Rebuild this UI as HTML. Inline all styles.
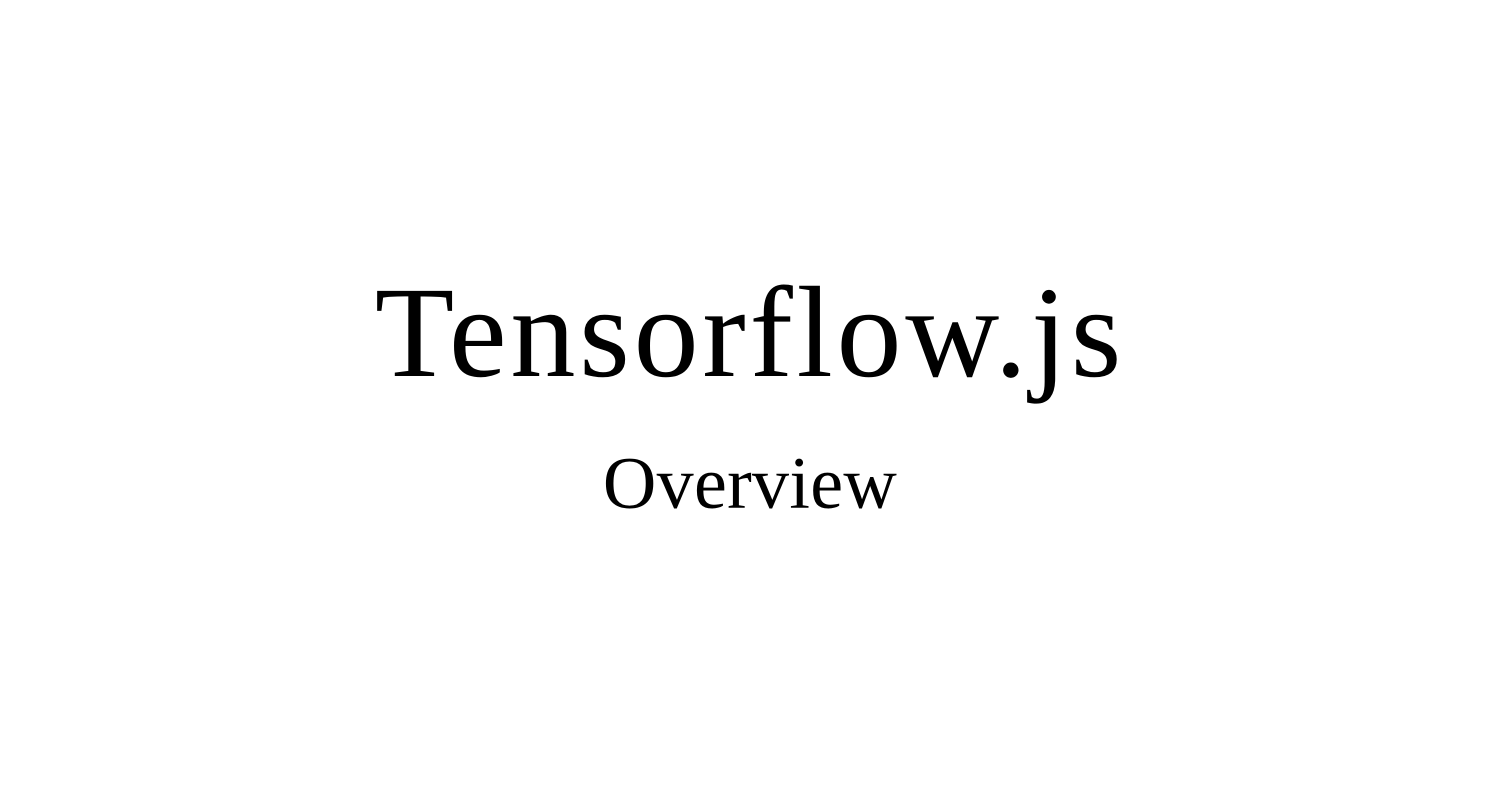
<!DOCTYPE html>
<html><head><meta charset="utf-8"><style>
html,body{margin:0;padding:0;background:#fff;width:1500px;height:787px;overflow:hidden;}
.t{position:absolute;left:0;width:1500px;text-align:center;font-family:"Liberation Serif",serif;color:#000;line-height:1;white-space:nowrap;}
#a{top:268px;font-size:130px;letter-spacing:3.8px;}
#b{top:447px;font-size:74px;letter-spacing:0.3px;}
</style></head><body>
<div class="t" id="a">Tensorflow.js</div>
<div class="t" id="b">Overview</div>
</body></html>
